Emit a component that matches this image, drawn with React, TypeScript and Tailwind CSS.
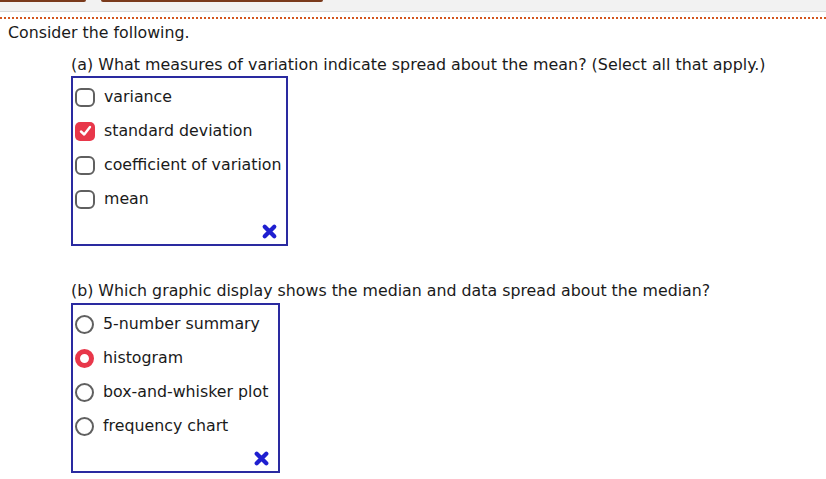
import React from "react";

const partA = [
  { label: "variance", checked: false },
  { label: "standard deviation", checked: true },
  { label: "coefficient of variation", checked: false },
  { label: "mean", checked: false },
];

const partB = [
  { label: "5-number summary", checked: false },
  { label: "histogram", checked: true },
  { label: "box-and-whisker plot", checked: false },
  { label: "frequency chart", checked: false },
];

function Checkbox({ checked }: { checked: boolean }) {
  if (checked) {
    return (
      <span className="flex h-[19px] w-[20px] items-center justify-center rounded-[5px] bg-[#e8374a]">
        <svg width="13" height="12" viewBox="0 0 13 12">
          <path d="M2 6.5 L5.2 9.5 L11 2" fill="none" stroke="white" strokeWidth="2.4" strokeLinecap="round" strokeLinejoin="round" />
        </svg>
      </span>
    );
  }
  return <span className="h-[19px] w-[20px] rounded-[6px] border-2 border-[#606060] bg-white" />;
}

function Radio({ checked }: { checked: boolean }) {
  if (checked) {
    return <span className="h-[19px] w-[19px] rounded-full border-[5px] border-[#e8374a] bg-white" />;
  }
  return <span className="h-[19px] w-[19px] rounded-full border-2 border-[#606060] bg-white" />;
}

function WrongMark() {
  return (
    <svg width="17" height="17" viewBox="0 0 16 16">
      <path d="M3.5 3.5 L12.5 12.5 M12.5 3.5 L3.5 12.5" stroke="#1f1fd0" strokeWidth="4" strokeLinecap="round" />
    </svg>
  );
}

function AnswerBox({
  items,
  kind,
  width,
}: {
  items: { label: string; checked: boolean }[];
  kind: "check" | "radio";
  width: string;
}) {
  return (
    <div className={`${width} border-2 border-[#2a2aa0] pt-[2px]`}>
      <div className="flex flex-col">
        {items.map((it) => (
          <div key={it.label} className="flex h-[34px] items-center gap-[9px] pl-[2px]">
            {kind === "check" ? <Checkbox checked={it.checked} /> : <Radio checked={it.checked} />}
            <span className="text-[15.8px] leading-[18px] text-[#1a1a1a]">{it.label}</span>
          </div>
        ))}
      </div>
      <div className="flex h-[28px] items-center justify-end pr-[8px] pt-[3px]">
        <WrongMark />
      </div>
    </div>
  );
}

export default function App() {
  return (
    <div className="h-[479px] w-[826px] overflow-hidden bg-white" style={{ fontFamily: '"DejaVu Sans", Verdana, sans-serif' }}>
      <div className="relative h-[12px] border-b border-[#d8d8d8] bg-[#f2f2f2]">
        <div className="absolute left-0 top-0 h-[2px] w-[86px] rounded-br-[3px] bg-[#7a3a1c]" />
        <div className="absolute left-[101px] top-0 h-[2px] w-[222px] rounded-bl-[3px] rounded-br-[3px] bg-[#7a3a1c]" />
      </div>
      <div className="mt-[5px] h-[2px] border-t-2 border-dotted border-[#d4561e]" />
      <div className="px-[8px] pt-[5px] text-[15.8px] leading-[18px] text-[#1a1a1a]">Consider the following.</div>
      <div className="pl-[71px]">
        <div className="mt-[14px] text-[15.9px] leading-[18px] text-[#1a1a1a]">
          (a) What measures of variation indicate spread about the mean? (Select all that apply.)
        </div>
        <div className="mt-[2px]">
          <AnswerBox items={partA} kind="check" width="w-[217px]" />
        </div>
        <div className="mt-[36px] text-[15.8px] leading-[18px] text-[#1a1a1a]">
          (b) Which graphic display shows the median and data spread about the median?
        </div>
        <div className="mt-[3px]">
          <AnswerBox items={partB} kind="radio" width="w-[209px]" />
        </div>
      </div>
    </div>
  );
}
